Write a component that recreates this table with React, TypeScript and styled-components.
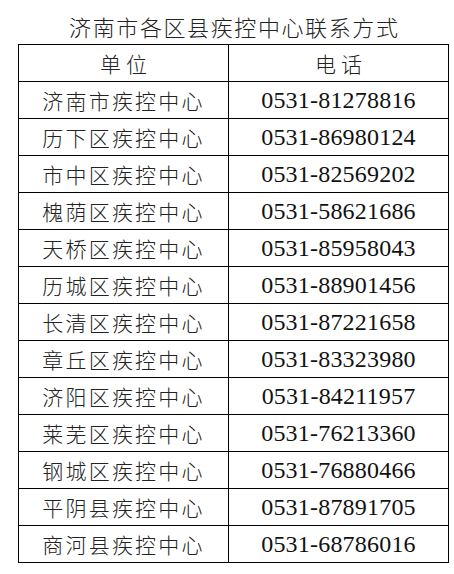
import * as React from 'react';
import styled, { createGlobalStyle } from 'styled-components';

type Row = {
  unit: string;
  phone: string;
}

const rows: Row[] = [
  { unit: '济南市疾控中心', phone: '0531-81278816' },
  { unit: '历下区疾控中心', phone: '0531-86980124' },
  { unit: '市中区疾控中心', phone: '0531-82569202' },
  { unit: '槐荫区疾控中心', phone: '0531-58621686' },
  { unit: '天桥区疾控中心', phone: '0531-85958043' },
  { unit: '历城区疾控中心', phone: '0531-88901456' },
  { unit: '长清区疾控中心', phone: '0531-87221658' },
  { unit: '章丘区疾控中心', phone: '0531-83323980' },
  { unit: '济阳区疾控中心', phone: '0531-84211957' },
  { unit: '莱芜区疾控中心', phone: '0531-76213360' },
  { unit: '钢城区疾控中心', phone: '0531-76880466' },
  { unit: '平阴县疾控中心', phone: '0531-87891705' },
  { unit: '商河县疾控中心', phone: '0531-68786016' },
];

const GlobalStyle = createGlobalStyle`
  html, body {
    margin: 0;
    padding: 0;
    background: #fff;
  }
`

const Page = styled.div`
  width: 454px;
  height: 574px;
  padding-left: 18px;
  box-sizing: border-box;
  font-family: "Noto Sans CJK SC", sans-serif;
  color: #222;
`

const Title = styled.h1`
  margin: 0;
  width: 431px;
  height: 44px;
  padding-top: 8px;
  box-sizing: border-box;
  line-height: 36px;
  text-align: center;
  font-size: 22px;
  font-weight: 300;
  letter-spacing: 1.6px;
  text-indent: 1.6px;
`

const Grid = styled.div`
  display: grid;
  grid-template-columns: 209px 219px;
  grid-auto-rows: 36px;
  gap: 1px;
  padding: 1px;
  width: 431px;
  box-sizing: border-box;
  background: #000;
`

const Cell = styled.div`
  background: #fff;
  display: flex;
  align-items: center;
  justify-content: center;
  font-size: 21px;
  font-weight: 300;
  letter-spacing: 2.2px;
  white-space: nowrap;
`

const HeadText = styled.span`
  letter-spacing: 5px;
  margin-right: -5px;
`

const Phone = styled.span`
  font-family: "Liberation Serif", "Times New Roman", serif;
  font-size: 24px;
  font-weight: 400;
  letter-spacing: 0.2px;
  color: #111;
`

export default function App() {
  return (
    <Page>
      <GlobalStyle />
      <Title>济南市各区县疾控中心联系方式</Title>
      <Grid>
        <Cell><HeadText>单位</HeadText></Cell>
        <Cell><HeadText>电话</HeadText></Cell>
        {rows.map(r => (
          <React.Fragment key={r.unit}>
            <Cell>{r.unit}</Cell>
            <Cell><Phone>{r.phone}</Phone></Cell>
          </React.Fragment>
        ))}
      </Grid>
    </Page>
  )
}
